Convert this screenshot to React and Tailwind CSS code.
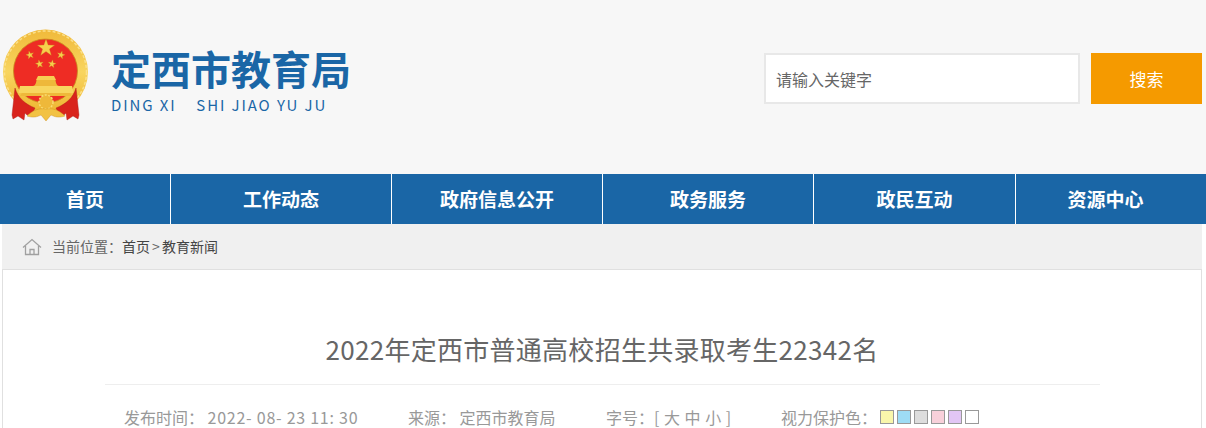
const cjk = { fontFamily: '"Noto Sans CJK SC", "Open Sans", sans-serif' };
const navItems = [
  ['首页', 'w-[171px] border-r'],
  ['工作动态', 'w-[221px] border-r'],
  ['政府信息公开', 'w-[211px] border-r'],
  ['政务服务', 'w-[211px] border-r'],
  ['政民互动', 'w-[202px] border-r'],
  ['资源中心', 'flex-1 pr-[11px]'],
];
const swatches = ['bg-[#f9f6ab]', 'bg-[#9edcf5]', 'bg-[#dddddd]', 'bg-[#f8d0da]', 'bg-[#e2c6f5]', 'bg-white'];

function Star({ cx, cy, r, rot = 0 }) {
  const pts = [];
  for (let i = 0; i < 10; i++) {
    const rad = i % 2 ? r * 0.4 : r;
    const a = (-90 + rot + i * 36) * Math.PI / 180;
    pts.push(`${(cx + rad * Math.cos(a)).toFixed(2)},${(cy + rad * Math.sin(a)).toFixed(2)}`);
  }
  return <polygon points={pts.join(' ')} fill="#f6cf4c" stroke="#c98a1d" strokeWidth="0.3" />;
}

function Emblem() {
  return (
    <svg width="90" height="100" viewBox="0 0 90 100" className="block shrink-0">
      <defs>
        <linearGradient id="gold" x1="0" y1="0" x2="0" y2="1">
          <stop offset="0" stopColor="#f0b93a" />
          <stop offset="0.5" stopColor="#f8d55f" />
          <stop offset="1" stopColor="#eeb32f" />
        </linearGradient>
      </defs>
      <circle cx="45.5" cy="44" r="42.5" fill="url(#gold)" />
      <circle cx="45.5" cy="44" r="41" fill="none" stroke="#fbe08a" strokeWidth="1.5" strokeDasharray="3 2" />
      <circle cx="45.5" cy="43" r="32" fill="#ee2c24" stroke="#c98a1d" strokeWidth="0.8" />
      <Star cx={46} cy={20} r={9} />
      <Star cx={30} cy={27} r={4.2} rot={-15} />
      <Star cx={61} cy={27} r={4.2} rot={15} />
      <Star cx={39.5} cy={36} r={4.2} rot={-10} />
      <Star cx={52} cy={36} r={4.2} rot={10} />
      <path d="M36 52h20l-2 -4h-16z" fill="#f7cf52" />
      <path d="M33 58c2 -.5 3 -2 3.500 -6h19c.5 4 1.500 5.500 3.500 6z" fill="#eeb83a" />
      <path d="M20 58h52l1.500 7h-55z" fill="#f8d65f" />
      <path d="M22 65h48l2 3h-52z" fill="#eeb83a" />
      <path d="M15 60c3 10 10 16 20 20l-3 6 -5 1 -2 -2 -1 7 -6 -4 -5 3 -1 -4z" fill="#d9231c" stroke="#a91a14" strokeWidth="0.4" />
      <path d="M76 60c-3 10 -10 16 -20 20l3 6 5 1 2 -2 1 7 6 -4 5 3 1 -4z" fill="#d9231c" stroke="#a91a14" strokeWidth="0.4" />
      <circle cx="46" cy="74" r="7" fill="#eeb83a" stroke="#f9dd75" strokeWidth="1.500" strokeDasharray="2 1.500" />
      <path d="M27 88c6 -6 12 -8 19 -7c7 -1 13 1 19 7c-6 2 -10 1 -14 -1l-5 6 -5 -6c-4 2 -8 3 -14 1z" fill="#f2c244" stroke="#c98a1d" strokeWidth="0.4" />
    </svg>
  );
}

export default function App() {
  return (
    <div className="h-[428px] w-[1206px] overflow-hidden bg-white" style={cjk}>
      <header className="flex h-[174px] items-start bg-[#f7f7f7]">
        <div className="mt-[28px] flex">
          <Emblem />
          <div className="ml-[21px] mt-[14px]">
            <div className="text-[40px] font-bold leading-[52px] text-[#1a66a6]">定西市教育局</div>
            <div className="mt-[1px] whitespace-pre text-[15px] leading-[20px] tracking-[1.9px] text-[#1a66a6]">
              <span className="mr-[4px]">DING XI</span>   SHI JIAO YU JU
            </div>
          </div>
        </div>
        <div className="ml-auto mr-[4px] mt-[53px] flex gap-[11px]">
          <div className="flex h-[51px] w-[316px] items-center border-2 border-[#e8e8e8] bg-white pl-[10px] text-[16px] text-[#666666]">请输入关键字</div>
          <div className="flex h-[51px] w-[111px] items-center justify-center bg-[#f59a00] text-[17px] text-white">搜索</div>
        </div>
      </header>

      <nav className="flex h-[50px] bg-[#1a66a6]">
        {navItems.map(([label, cls]) => (
          <div key={label} className={`${cls} flex items-center justify-center border-white text-[19px] font-bold text-white`}>{label}</div>
        ))}
      </nav>

      <div className="mx-[2px] w-[1200px]">
        <div className="flex h-[45px] items-center bg-[#f0f0f0] pl-[20px] text-[14px] text-[#666666]">
          <svg width="20" height="18" viewBox="0 0 20 18" fill="none" stroke="#a0a0a0" strokeWidth="1.300" className="shrink-0">
            <path d="M1 9.500 10 1.500l9 8" />
            <path d="M3.500 8v8.500h13V8" />
            <path d="M8 16.500v-5h4v5" />
          </svg>
          <span className="ml-[10px]">当前位置：</span>
          <span className="text-[#444444]">首页</span>
          <span className="w-[12px] text-center">&gt;</span>
          <span className="text-[#444444]">教育新闻</span>
        </div>
        <main className="h-[159px] border-x border-t border-[#e0e0e0] bg-white">
          <h1 className="mt-[57px] text-center text-[26px] font-normal leading-[44px] tracking-[0.28px] text-[#666666]">2022年定西市普通高校招生共录取考生22342名</h1>
          <div className="ml-[102px] mr-[101px] mt-[13px] h-[1px] bg-[#eeeeee]" />
          <div className="mt-[21px] flex items-center whitespace-pre pl-[121px] text-[16px] leading-[22px] text-[#999999]">
            <span className="w-[284px]">发布时间： <span className="tracking-[0.75px]">2022- 08- 23 11: 30</span></span>
            <span className="w-[198px]">来源： 定西市教育局</span>
            <span className="w-[175px]">字号：<span className="tracking-[0.5px]">[ 大 中 小 ]</span></span>
            <span>视力保护色：</span>
            <span className="ml-[3px] flex gap-[3px]">
              {swatches.map((s, i) => (
                <i key={i} className={`${s} block h-[14px] w-[14px] border border-[#999999]`} />
              ))}
            </span>
          </div>
        </main>
      </div>
    </div>
  );
}
